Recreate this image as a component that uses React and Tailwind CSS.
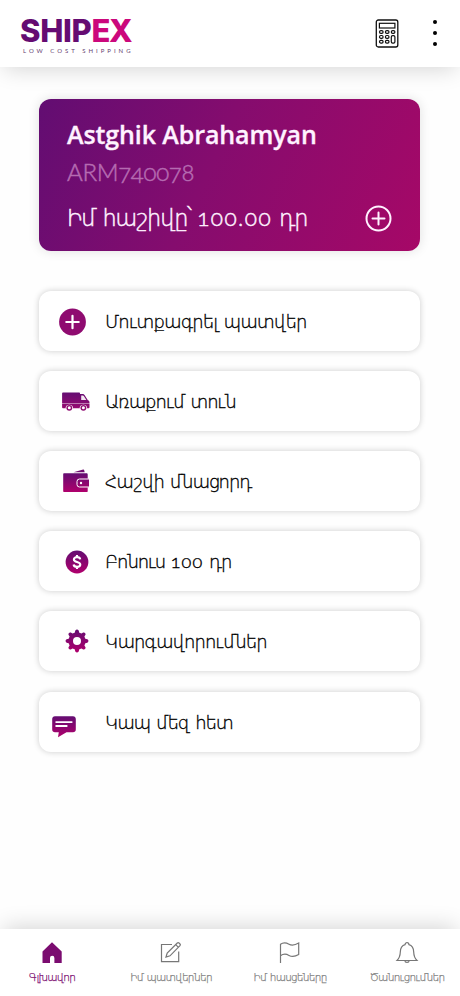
import { useState } from "react";

const armenian = "font-['Lato','DejaVu_Sans',sans-serif] [font-feature-settings:'onum']";

function PurpleFill({ id }) {
  return (
    <defs>
      <linearGradient id={id} x1="0" y1="0" x2="0" y2="1">
        <stop offset="0" stopColor="#640d72" />
        <stop offset="1" stopColor="#b0006c" />
      </linearGradient>
    </defs>
  );
}

function PlusIcon() {
  return (
    <svg width="28" height="28" viewBox="0 0 28 28">
      <circle cx="13.5" cy="14" r="13.4" fill="#8f0b70" />
      <path d="M13.5 7.8v12.4M7.3 14h12.4" stroke="#fff" strokeWidth="2.2" strokeLinecap="round" />
    </svg>
  );
}

function TruckIcon() {
  return (
    <svg width="28" height="20" viewBox="0 0 28 20">
      <defs>
        <linearGradient id="truck" x1="0" y1="0" x2="0" y2="1">
          <stop offset="0" stopColor="#640d72" />
          <stop offset="1" stopColor="#960a70" />
        </linearGradient>
      </defs>
      <path
        d="M1 .5h16c.6 0 1 .4 1 1V2h2.5c1 0 1.6.3 2.2 1.2l3 4.8c1.3.5 1.8 1.2 1.8 2.5v4.8c0 .6-.3.9-.9.9H1c-.6 0-.9-.3-.9-.9V1.4c0-.6.3-.9.9-.9z"
        fill="url(#truck)"
      />
      <path d="M19.2 3.4h1.7c.4 0 .7.2.9.5L24.3 8h-5.1zM0 11.5h28v.5H0z" fill="#fff" fillOpacity=".9" />
      <path d="M3.5 16.5a3.8 3.8 0 0 1 7.6 0M17.6 16.5a3.8 3.8 0 0 1 7.6 0" fill="#fff" />
      <circle cx="7.3" cy="15.8" r="2.9" fill="#8f0b70" />
      <circle cx="21.4" cy="15.8" r="2.9" fill="#8f0b70" />
      <circle cx="7.3" cy="15.8" r="1.5" fill="#fff" />
      <circle cx="21.4" cy="15.8" r="1.5" fill="#fff" />
    </svg>
  );
}

function WalletIcon() {
  return (
    <svg width="27" height="24" viewBox="0 0 27 24">
      <PurpleFill id="wallet" />
      <path d="M10.5 3.3 20.2.6c.5-.1.8.1.9.5l.6 2.2z" fill="#700c71" />
      <path
        d="M1.2 4.2h22.3c.7 0 1.2.5 1.2 1.2v4.3H26v8.6h-1.3v4.2c0 .3-.3.5-.6.5H1.2c-.6 0-1-.4-1-1V5.2c0-.6.4-1 1-1z"
        fill="url(#wallet)"
      />
      <path d="M26.2 10H16.5a2.5 2.5 0 0 0-2.5 2.5v3a2.5 2.5 0 0 0 2.5 2.5h9.7" fill="none" stroke="#fff" strokeWidth="1" />
      <circle cx="18" cy="14" r="1.2" fill="#fff" />
    </svg>
  );
}

function BonusIcon() {
  return (
    <svg width="24" height="24" viewBox="0 0 24 24">
      <PurpleFill id="bonus" />
      <circle cx="12" cy="12" r="11.4" fill="url(#bonus)" />
      <path
        d="M15.2 9.3c-.2-1.4-1.4-2.2-3.2-2.2s-3.1.9-3.1 2.3c0 3.3 6.4 1.8 6.4 5.2 0 1.5-1.3 2.3-3.3 2.3-1.9 0-3.2-.9-3.4-2.4M12 4.9v2.2M12 16.9v2.2"
        fill="none"
        stroke="#fff"
        strokeWidth="2.1"
      />
    </svg>
  );
}

function GearIcon() {
  return (
    <svg width="24" height="24" viewBox="0 0 24 24">
      <PurpleFill id="gear" />
      <path
        fill="url(#gear)"
        fillRule="evenodd"
        d="M10.3 1.6Q12-.5 13.7 1.6L14.3 3.7 16.5 4.6 18.2 3.5Q20.9 3.1 20.5 5.8L19.4 7.5 20.3 9.7 22.4 10.3Q24.5 12 22.4 13.7L20.3 14.3 19.4 16.5 20.5 18.2Q20.9 20.9 18.2 20.5L16.5 19.4 14.3 20.3 13.7 22.4Q12 24.5 10.3 22.4L9.7 20.3 7.5 19.4 5.8 20.5Q3.1 20.9 3.5 18.2L4.6 16.5 3.7 14.3 1.6 13.7Q-.5 12 1.6 10.3L3.7 9.7 4.6 7.5 3.5 5.8Q3.1 3.1 5.8 3.5L7.5 4.6 9.7 3.7zM12 8a4 4 0 1 0 0 8 4 4 0 0 0 0-8z"
      />
    </svg>
  );
}

function ChatIcon() {
  return (
    <svg width="24" height="22" viewBox="0 0 24 22">
      <PurpleFill id="chat" />
      <path
        d="M3 .3h18c1.700 0 2.800 1.100 2.800 2.800v10.400c0 1.700-1.100 2.800-2.800 2.800h-6.500L6 21.300l.8-5H3c-1.700 0-2.800-1.100-2.800-2.800V3.100C.2 1.400 1.300.3 3 .3z"
        fill="url(#chat)"
      />
      <path d="M4.200 6.100h15.500M4.200 10h10.500" stroke="#fff" strokeWidth="1.9" strokeLinecap="round" />
    </svg>
  );
}

function CalculatorIcon() {
  return (
    <svg width="24" height="29" viewBox="0 0 24 29" fill="none" stroke="#111" strokeWidth="1.2">
      <rect x="1.3" y="1" width="21.5" height="27" rx="2" strokeWidth="1.3" />
      <rect x="4.4" y="4.3" width="15.5" height="4.7" />
      <rect x="4.5" y="11.6" width="3.6" height="2.8" rx="1.4" />
      <rect x="10.4" y="11.6" width="3.6" height="2.8" rx="1.4" />
      <rect x="16.3" y="11.6" width="3.6" height="2.8" rx="1.4" />
      <rect x="4.5" y="16.5" width="3.6" height="2.8" rx="1.4" />
      <rect x="10.4" y="16.5" width="3.6" height="2.8" rx="1.4" />
      <rect x="4.5" y="21.3" width="3.6" height="2.8" rx="1.4" />
      <rect x="10.4" y="21.3" width="3.6" height="2.8" rx="1.4" />
      <rect x="16.3" y="16.7" width="3.6" height="7.4" rx="1.4" />
    </svg>
  );
}

const items = [
  { label: "Մուտքագրել պատվեր", icon: <PlusIcon />, iconClass: "ml-5 mt-0.5", textClass: "tracking-[-0.95px]" },
  { label: "Առաքում տուն", icon: <TruckIcon />, iconClass: "ml-[23px] mt-px", textClass: "tracking-[-1.25px]" },
  { label: "Հաշվի մնացորդ", icon: <WalletIcon />, iconClass: "ml-6", textClass: "tracking-[-1.1px]" },
  {
    label: (
      <>
        Բոնուս <span className="font-light tracking-[1.2px] [-webkit-text-stroke:0.4px]">100</span> դր
      </>
    ),
    icon: <BonusIcon />,
    iconClass: "ml-[26px] mt-0.5",
    textClass: "tracking-[-1.4px]",
  },
  { label: "Կարգավորումներ", icon: <GearIcon />, iconClass: "ml-[26px]", textClass: "tracking-[-1px]" },
  { label: "Կապ մեզ հետ", icon: <ChatIcon />, iconClass: "ml-[13px] mt-2.5", textClass: "tracking-[-1.15px]" },
];

const tabs = [
  {
    label: "Գլխավոր",
    width: "w-[104px]",
    icon: <path d="M2.5 10.5 12 1.3l9.7 9.2V22h-7.3v-5a2.2 2.2 0 0 0-4.4 0v5H2.5z" fill="#7b0c70" stroke="none" />,
  },
  {
    label: "Իմ պատվերներ",
    width: "w-[134px]",
    icon: (
      <>
        <path d="M13 3.5H2.5v17.2h17.2V10.5" />
        <path d="m7 16 1.2-4L18.3 2c.5-.5 1.2-.5 1.7 0l1 1c.5.5.5 1.200 0 1.700L11 14.800zM16.800 3.700l2.600 2.600" />
      </>
    ),
  },
  {
    label: "Իմ հասցեները",
    width: "w-[104px]",
    icon: <path d="M2.5 22V3.3C5.5 1 8.5 1.8 11 3.2s5.5 1.3 9.7-1.2v11.5c-4.2 2.5-7.2 2.3-9.7.9S5.5 12.5 2.5 14.8" />,
  },
  {
    label: "Ծանուցումներ",
    width: "w-[130px]",
    icon: (
      <path d="M2 19.5c2.3-2.3 3.2-4.5 3.3-8.5.1-4 1.9-6.6 4.8-7.4 0-2.6 3.8-2.6 3.8 0 2.9.8 4.7 3.4 4.8 7.4.1 4 1 6.2 3.3 8.5zM9.8 19.5c.2 2.6 4.2 2.6 4.4 0" />
    ),
  },
];

export default function App() {
  const [active, setActive] = useState(0);

  return (
    <div className="flex h-[996px] w-[460px] flex-col overflow-hidden bg-[#fefefe]">
      <header className="flex h-[67px] shrink-0 items-start bg-white pl-5 shadow-[0_6px_22px_-4px_rgba(0,0,0,0.17)]">
        <div className="mt-[15px] w-[112px]">
          <p className="whitespace-nowrap font-['Inter',sans-serif] text-[31px] leading-[32px] font-extrabold tracking-[-0.3px] text-[#650c72]">
            SHIP<span className="tracking-[-1.5px] text-[#cb087c]">EX</span>
          </p>
          <p className="pl-[3px] whitespace-nowrap font-['Lato',sans-serif] text-[6px] leading-[7px] tracking-[3px] text-[#65406f]">
            LOW COST SHIPPING
          </p>
        </div>
        <button type="button" className="mt-[19px] ml-[243px]">
          <CalculatorIcon />
        </button>
        <button type="button" className="mt-5 ml-[34px] flex flex-col gap-[7px]">
          <span className="h-1 w-1 rounded-full bg-black" />
          <span className="h-1 w-1 rounded-full bg-black" />
          <span className="h-1 w-1 rounded-full bg-black" />
        </button>
      </header>

      <main className="flex-1 px-[39px] pt-8">
        <section className="h-[152px] w-[381px] rounded-xl bg-linear-[115deg,#620d72,#850c6e_45%,#a60867] px-7 pt-5 shadow-[0_0_12px_rgba(0,0,0,0.12)]">
          <h1 className="whitespace-nowrap font-['Open_Sans',sans-serif] text-[25px] leading-[30px] font-semibold tracking-[-0.1px] text-[#fff2ff] [-webkit-text-stroke:0.3px]">
            Astghik Abrahamyan
          </h1>
          <p className="mt-[7px] font-['Lato',sans-serif] text-2xl leading-8 font-light tracking-[-0.3px] text-[#b56bb1] [-webkit-text-stroke:0.5px] [font-feature-settings:'onum']">
            ARM740078
          </p>
          <div className="mt-3.5 flex items-center justify-between">
            <p className={`whitespace-nowrap text-[22.5px] leading-8 font-extralight tracking-[-1.5px] text-[#fff2ff] [word-spacing:2px] [-webkit-text-stroke:0.5px] ${armenian}`}>
              Իմ հաշիվը՝ <span className="font-light tracking-[1.5px] [-webkit-text-stroke:0.5px]">100.00</span> դր
            </p>
            <svg width="27" height="27" viewBox="0 0 27 27" fill="none" stroke="#fff2ff" strokeWidth="2">
              <circle cx="13.5" cy="13.5" r="12" />
              <path d="M13.5 7.5v12M7.5 13.5h12" strokeLinecap="round" />
            </svg>
          </div>
        </section>

        <nav className="mt-10 flex flex-col gap-5">
          {items.map((item, i) => (
            <button
              key={i}
              type="button"
              className="flex h-[60px] w-[381px] items-center rounded-xl bg-white text-left shadow-[0_0_6px_rgba(0,0,0,0.2)] last:mt-px"
            >
              <span className="flex w-[66px] shrink-0">
                <span className={item.iconClass}>{item.icon}</span>
              </span>
              <span
                className={`whitespace-nowrap text-lg leading-6 font-extralight text-black [word-spacing:2px] [-webkit-text-stroke:0.35px] ${armenian} ${item.textClass}`}
              >
                {item.label}
              </span>
            </button>
          ))}
        </nav>
      </main>

      <footer className="flex h-[67px] shrink-0 bg-white shadow-[0_-6px_22px_-4px_rgba(0,0,0,0.17)]">
        {tabs.map((tab, i) => (
          <button
            key={tab.label}
            type="button"
            onClick={() => setActive(i)}
            className={`flex shrink-0 flex-col items-center pt-3 ${tab.width} ${i === active ? "text-[#7b0c70]" : "text-[#808080]"}`}
          >
            <svg width="24" height="24" viewBox="0 0 24 24" fill="none" stroke="#777" strokeWidth="1.2">
              {tab.icon}
            </svg>
            <span className={`mt-1 whitespace-nowrap text-[10.5px] leading-4 font-extralight tracking-[-0.75px] [word-spacing:1px] [-webkit-text-stroke:0.25px] ${armenian}`}>
              {tab.label}
            </span>
          </button>
        ))}
      </footer>
    </div>
  );
}
